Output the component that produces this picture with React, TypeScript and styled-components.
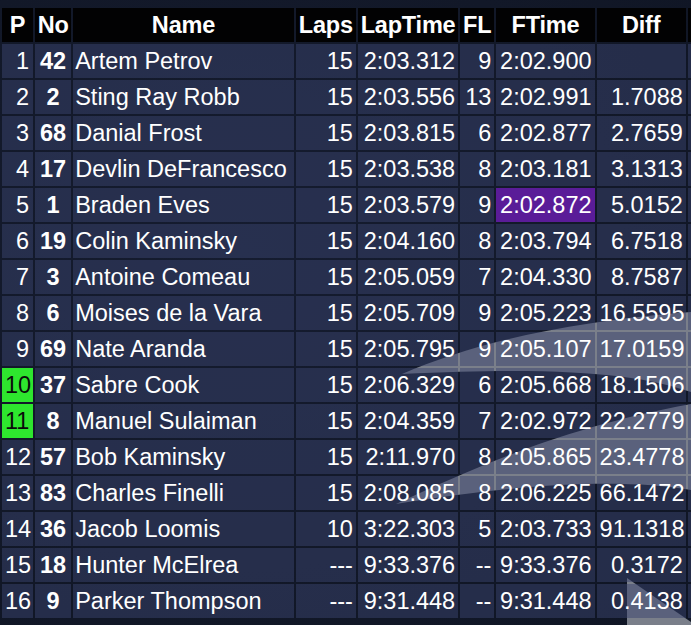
import React from "react";
import styled, { createGlobalStyle } from "styled-components";

type Result = {
  pos: number;
  no: string;
  name: string;
  laps: string;
  lapTime: string;
  fl: string;
  fTime: string;
  diff: string;
  gained?: boolean;
  fastest?: boolean;
};

const results: Result[] = [
  { pos: 1, no: "42", name: "Artem Petrov", laps: "15", lapTime: "2:03.312", fl: "9", fTime: "2:02.900", diff: "" },
  { pos: 2, no: "2", name: "Sting Ray Robb", laps: "15", lapTime: "2:03.556", fl: "13", fTime: "2:02.991", diff: "1.7088" },
  { pos: 3, no: "68", name: "Danial Frost", laps: "15", lapTime: "2:03.815", fl: "6", fTime: "2:02.877", diff: "2.7659" },
  { pos: 4, no: "17", name: "Devlin DeFrancesco", laps: "15", lapTime: "2:03.538", fl: "8", fTime: "2:03.181", diff: "3.1313" },
  { pos: 5, no: "1", name: "Braden Eves", laps: "15", lapTime: "2:03.579", fl: "9", fTime: "2:02.872", diff: "5.0152", fastest: true },
  { pos: 6, no: "19", name: "Colin Kaminsky", laps: "15", lapTime: "2:04.160", fl: "8", fTime: "2:03.794", diff: "6.7518" },
  { pos: 7, no: "3", name: "Antoine Comeau", laps: "15", lapTime: "2:05.059", fl: "7", fTime: "2:04.330", diff: "8.7587" },
  { pos: 8, no: "6", name: "Moises de la Vara", laps: "15", lapTime: "2:05.709", fl: "9", fTime: "2:05.223", diff: "16.5595" },
  { pos: 9, no: "69", name: "Nate Aranda", laps: "15", lapTime: "2:05.795", fl: "9", fTime: "2:05.107", diff: "17.0159" },
  { pos: 10, no: "37", name: "Sabre Cook", laps: "15", lapTime: "2:06.329", fl: "6", fTime: "2:05.668", diff: "18.1506", gained: true },
  { pos: 11, no: "8", name: "Manuel Sulaiman", laps: "15", lapTime: "2:04.359", fl: "7", fTime: "2:02.972", diff: "22.2779", gained: true },
  { pos: 12, no: "57", name: "Bob Kaminsky", laps: "15", lapTime: "2:11.970", fl: "8", fTime: "2:05.865", diff: "23.4778" },
  { pos: 13, no: "83", name: "Charles Finelli", laps: "15", lapTime: "2:08.085", fl: "8", fTime: "2:06.225", diff: "66.1472" },
  { pos: 14, no: "36", name: "Jacob Loomis", laps: "10", lapTime: "3:22.303", fl: "5", fTime: "2:03.733", diff: "91.1318" },
  { pos: 15, no: "18", name: "Hunter McElrea", laps: "---", lapTime: "9:33.376", fl: "--", fTime: "9:33.376", diff: "0.3172" },
  { pos: 16, no: "9", name: "Parker Thompson", laps: "---", lapTime: "9:31.448", fl: "--", fTime: "9:31.448", diff: "0.4138" }
];

const cellBg = "rgba(57, 68, 110, 0.5)";

const GlobalStyle = createGlobalStyle`
  html, body {
    margin: 0;
    padding: 0;
    overflow: hidden;
    background: #121828;
  }
  body {
    font-family: "Liberation Sans", Arial, sans-serif;
    color: #fff;
  }
`;

const Screen = styled.div`
  position: relative;
  width: 691px;
  height: 625px;
  overflow: hidden;
  background: radial-gradient(ellipse at 35% 40%, #151c30 0%, #121828 60%, #0f1524 100%);
`;

const Backdrop = styled.svg`
  position: absolute;
  inset: 0;
  width: 691px;
  height: 625px;
`;

const Board = styled.table`
  position: relative;
  border-collapse: separate;
  border-spacing: 2px;
  margin-top: 6px;
  table-layout: fixed;
  width: 740px;
  font-size: 23.5px;
`;

const HeadCell = styled.th<{ $w: number }>`
  width: ${p => p.$w}px;
  height: 34px;
  padding: 0;
  background: #020203;
  font-weight: bold;
  text-align: center;
  white-space: nowrap;
  letter-spacing: -0.2px;
`;

const Row = styled.tr``;

const Cell = styled.td<{ $align?: "left" | "right" | "center"; $bold?: boolean }>`
  height: 34px;
  padding: 0 3px;
  background: ${cellBg};
  text-align: ${p => p.$align || "right"};
  font-weight: ${p => (p.$bold ? "bold" : "normal")};
  white-space: nowrap;
  overflow: hidden;
`;

const PosCell = styled(Cell)<{ $gained?: boolean }>`
  background: ${p => (p.$gained ? "#2ee62e" : cellBg)};
  color: ${p => (p.$gained ? "#0b0b0b" : "#fff")};
  padding-right: 4px;
`;

const NameCell = styled(Cell)`
  padding-left: 2px;
`;

const TimeCell = styled(Cell)<{ $fastest?: boolean }>`
  background: ${p => (p.$fastest ? "#5a1c98" : cellBg)};
`;

const columns = [
  { key: "P", w: 31 },
  { key: "No", w: 36 },
  { key: "Name", w: 220 },
  { key: "Laps", w: 60 },
  { key: "LapTime", w: 100 },
  { key: "FL", w: 34 },
  { key: "FTime", w: 98 },
  { key: "Diff", w: 89 },
  { key: "", w: 50 }
];

const App: React.FC = () => {
  return (
    <Screen>
      <GlobalStyle />
      <Backdrop viewBox="0 0 691 625">
        <path
          d="M402 374 C 470 345, 560 322, 691 312 L 691 392 C 640 374, 560 366, 402 374 Z"
          fill="#7a7f8a"
        />
        <path
          d="M396 504 C 470 470, 560 428, 691 404 L 691 490 C 620 478, 520 484, 396 504 Z"
          fill="#7a7f8a"
        />
        <path d="M627 578 L 691 622 L 691 625 L 627 625 Z" fill="#7a7f8a" />
      </Backdrop>
      <Board>
        <thead>
          <tr>
            {columns.map(c => (
              <HeadCell key={c.key || "extra"} $w={c.w}>
                {c.key}
              </HeadCell>
            ))}
          </tr>
        </thead>
        <tbody>
          {results.map(r => (
            <Row key={r.pos}>
              <PosCell $gained={r.gained}>{r.pos}</PosCell>
              <Cell $align="center" $bold>
                {r.no}
              </Cell>
              <NameCell $align="left">{r.name}</NameCell>
              <Cell>{r.laps}</Cell>
              <Cell>{r.lapTime}</Cell>
              <Cell>{r.fl}</Cell>
              <TimeCell $fastest={r.fastest}>{r.fTime}</TimeCell>
              <Cell>{r.diff}</Cell>
              <Cell />
            </Row>
          ))}
        </tbody>
      </Board>
    </Screen>
  );
};

export default App;
